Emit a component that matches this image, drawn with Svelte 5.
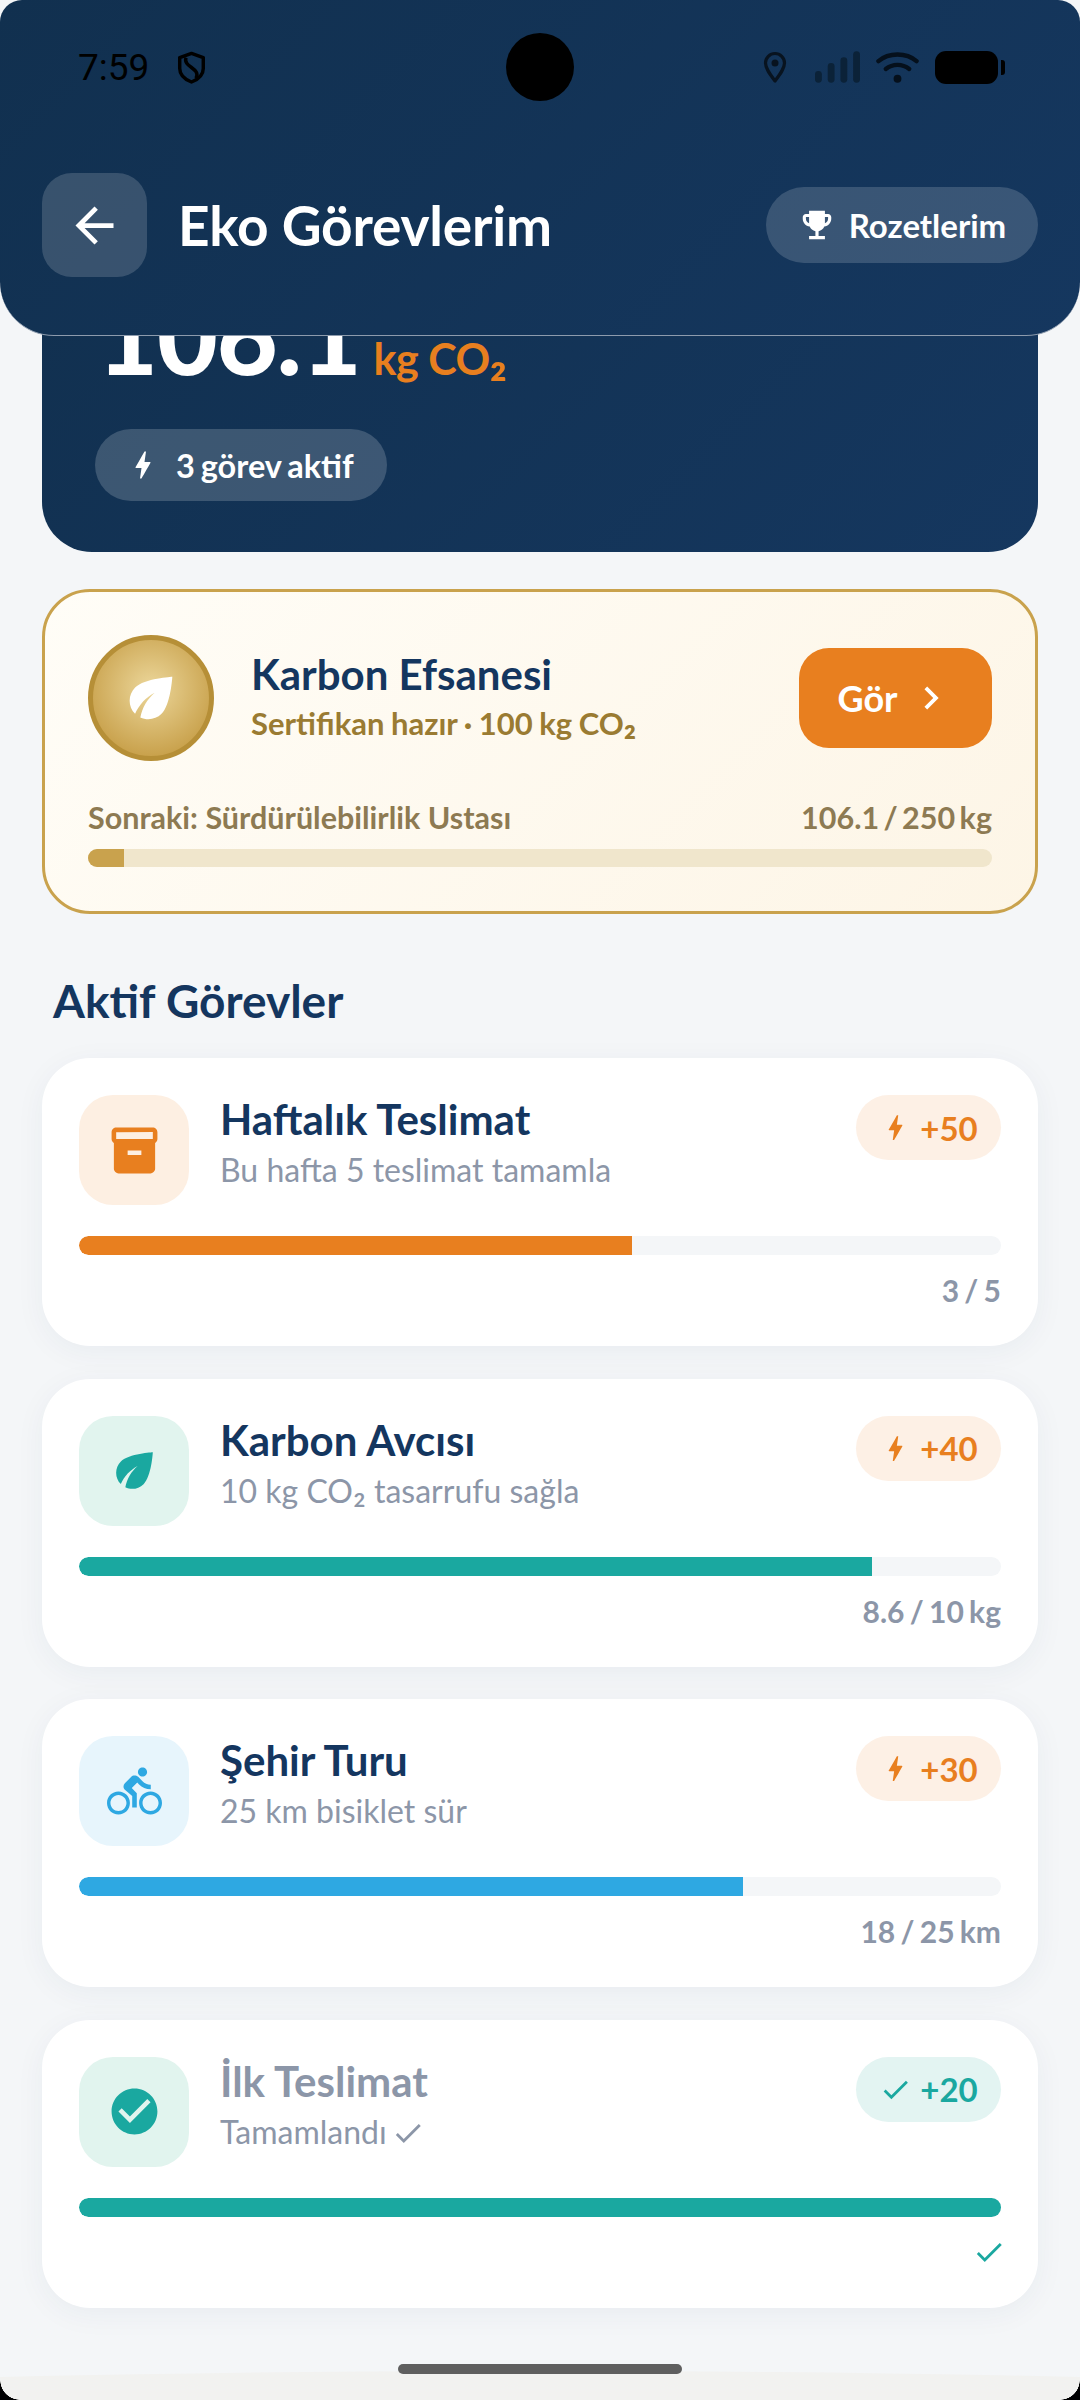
<script>
  const bolt = "M11 21h-1l1-7H7.5c-.58 0-.57-.32-.38-.66.19-.34.05-.08.07-.12C8.48 10.94 10.42 7.54 13 3h1l-1 7h3.5c.49 0 .56.33.47.51l-.07.15C12.96 17.55 11 21 11 21z";
  const check = "M9 16.17L4.83 12l-1.42 1.41L9 19 21 7l-1.41-1.41z";
  const eco = "M6.05 8.05c-2.73 2.73-2.73 7.15-.02 9.88 1.47-3.4 4.09-6.24 7.36-7.93-2.77 2.34-4.71 5.61-5.39 9.32 2.6 1.23 5.8.78 7.95-1.37C19.43 14.47 20 4 20 4S9.53 4.57 6.05 8.05z";
  const box = "M20 2H4c-1 0-2 .9-2 2v3.01c0 .72.43 1.34 1 1.69V20c0 1.1 1.1 2 2 2h14c.9 0 2-.9 2-2V8.7c.57-.35 1-.97 1-1.69V4c0-1.1-1-2-2-2zm-5 12H9v-2h6v2zm5-7H4V4l16-.02V7z";
  const bike = "M15.5 5.5c1.1 0 2-.9 2-2s-.9-2-2-2-2 .9-2 2 .9 2 2 2zM5 12c-2.8 0-5 2.2-5 5s2.2 5 5 5 5-2.2 5-5-2.2-5-5-5zm0 8.5c-1.9 0-3.5-1.6-3.5-3.5s1.6-3.5 3.5-3.5 3.5 1.6 3.5 3.5-1.6 3.5-3.5 3.5zm5.8-10l2.4-2.4.8.8c1.3 1.3 3 2.1 5.1 2.1V9c-1.5 0-2.7-.6-3.6-1.5l-1.9-1.9c-.5-.4-1-.6-1.6-.6s-1.1.2-1.4.6L7.8 8.4c-.4.4-.6.9-.6 1.4 0 .6.2 1.1.6 1.4L11 14v5h2v-6.2l-2.2-2.3zM19 12c-2.8 0-5 2.2-5 5s2.2 5 5 5 5-2.2 5-5-2.2-5-5-5zm0 8.5c-1.9 0-3.5-1.6-3.5-3.5s1.6-3.5 3.5-3.5 3.5 1.6 3.5 3.5-1.6 3.5-3.5 3.5z";
  const circle = "M12 2C6.48 2 2 6.48 2 12s4.48 10 10 10 10-4.48 10-10S17.52 2 12 2zm-2 15l-5-5 1.41-1.41L10 14.17l7.59-7.59L19 8l-9 9z";

  const tasks = [
    { title: "Haftalık Teslimat", desc: "Bu hafta 5 teslimat tamamla", icon: box, tint: "orange", xp: "+50", pct: 60, value: "3 / 5" },
    { title: "Karbon Avcısı", desc: "10 kg CO", sub: "₂", rest: " tasarrufu sağla", icon: eco, tint: "teal", xp: "+40", pct: 86, value: "8.6 / 10 kg" },
    { title: "Şehir Turu", desc: "25 km bisiklet sür", icon: bike, tint: "blue", xp: "+30", pct: 72, value: "18 / 25 km" },
    { title: "İlk Teslimat", desc: "Tamamlandı", icon: circle, tint: "teal", xp: "+20", pct: 100, done: true }
  ];
</script>

<div class="screen">
  <header class="header">
    <div class="status">
      <div class="status-side">
        <span class="time">7:59</span>
        <svg class="shield" viewBox="0 0 32 36" fill="none" stroke="#000" stroke-width="3.8">
          <path d="M16 2.5 29 7v12c0 7-5.5 12-13 15C8.500 31 3 26 3 19V7z" stroke-linejoin="round" />
          <path d="M10 7c-2 5 2 8 6 11s8 6 5 12" />
        </svg>
      </div>
      <div class="camera"></div>
      <div class="status-side right">
        <svg class="pin" viewBox="0 0 24 32" fill="none" stroke="#08131f" stroke-width="3.2">
          <path d="M12 30C6 22 2.500 17 2.500 12a9.500 9.500 0 0 1 19 0c0 5-3.500 10-9.500 18z" stroke-linejoin="round" />
          <circle cx="12" cy="12" r="3.500" fill="#08131f" stroke="none" />
        </svg>
        <svg class="signal" viewBox="0 0 46 32" fill="#0b2238">
          <rect x="0" y="20" width="7" height="12" rx="3.500" />
          <rect x="13" y="12" width="7" height="20" rx="3.500" />
          <rect x="26" y="6" width="7" height="26" rx="3.500" />
          <rect x="39" y="0" width="7" height="32" rx="3.500" />
        </svg>
        <svg class="wifi" viewBox="0 0 44 32" fill="none" stroke="#05101c" stroke-width="4.500" stroke-linecap="round">
          <path d="M2.500 10C13 1 31 1 41.500 10" />
          <path d="M10 18c7-5.500 17-5.500 24 0" />
          <circle cx="22" cy="28" r="4" fill="#05101c" stroke="none" />
        </svg>
        <div class="battery"><span></span></div>
      </div>
    </div>
    <div class="toolbar">
      <button class="back" aria-label="Geri">
        <svg viewBox="0 0 24 24" fill="#fff"><path d="M20 11H7.830l5.590-5.590L12 4l-8 8 8 8 1.410-1.410L7.830 13H20v-2z" /></svg>
      </button>
      <h1>Eko Görevlerim</h1>
      <button class="badges">
        <svg viewBox="0 0 24 24" fill="#fff"><path d="M19 5h-2V3H7v2H5c-1.100 0-2 .9-2 2v1c0 2.550 1.920 4.630 4.390 4.940.63 1.500 1.980 2.630 3.610 2.960V19H7v2h10v-2h-4v-3.100c1.630-.33 2.980-1.460 3.610-2.960C19.080 12.630 21 10.550 21 8V7c0-1.100-.9-2-2-2zM5 8V7h2v3.820C5.840 10.400 5 9.300 5 8zm14 0c0 1.300-.84 2.400-2 2.820V7h2v1z" /></svg>
        Rozetlerim
      </button>
    </div>
  </header>

  <main class="content">
    <section class="hero">
      <div class="amount"><strong>106.1</strong><span>kg CO<i class="sub">₂</i></span></div>
      <div class="active">
        <svg viewBox="0 0 24 24" fill="#fff"><path d={bolt} /></svg>
        3 görev aktif
      </div>
    </section>

    <section class="gold">
      <div class="gold-top">
        <div class="medal"><svg viewBox="0 0 24 24" fill="#fff"><path d={eco} /></svg></div>
        <div class="gold-text">
          <h2>Karbon Efsanesi</h2>
          <p>Sertifikan hazır · 100 kg CO<i class="sub">₂</i></p>
        </div>
        <button class="see">
          Gör
          <svg viewBox="0 0 24 24" fill="#fff"><path d="M10 6L8.590 7.410 13.170 12l-4.580 4.590L10 18l6-6z" /></svg>
        </button>
      </div>
      <div class="gold-row"><span>Sonraki: Sürdürülebilirlik Ustası</span><span class="gold-val">106.1 / 250 kg</span></div>
      <div class="gold-track"><div class="gold-fill"></div></div>
    </section>

    <h3>Aktif Görevler</h3>

    <div class="tasks">
      {#each tasks as t}
        <article class="task">
          <div class="task-top">
            <div class="icon {t.tint}"><svg viewBox="0 0 24 24"><path d={t.icon} /></svg></div>
            <div class="task-text">
              <h4 class:muted={t.done}>{t.title}</h4>
              <p>{t.desc}{#if t.sub}<i class="sub">{t.sub}</i>{t.rest}{/if}{#if t.done}<svg class="tiny" viewBox="0 0 24 24" fill="#8c96a8"><path d={check} /></svg>{/if}</p>
            </div>
            <div class="xp" class:xp-done={t.done}>
              <svg viewBox="0 0 24 24"><path d={t.done ? check : bolt} /></svg>
              {t.xp}
            </div>
          </div>
          <div class="track"><div class="fill {t.tint}-fill" style="width:{t.pct}%"></div></div>
          <div class="value">
            {#if t.done}
              <svg class="done-check" viewBox="0 0 24 24" fill="#1aa8a0"><path d={check} /></svg>
            {:else}
              {t.value}
            {/if}
          </div>
        </article>
      {/each}
    </div>
  </main>

  <div class="gesture"><span></span></div>
  <div class="corner left"></div>
  <div class="corner right"></div>
</div>

<style>
  :global(body) { margin: 0; background: #f4f6f8; }
  .screen {
    position: relative; width: 1080px; height: 2400px; overflow: hidden;
    background: #f4f6f8; font-family: "Lato", "Noto Sans", sans-serif;
  }
  h1, h2, h3, h4, p { margin: 0; }
  button { border: 0; font-family: inherit; padding: 0; }
  .sub { font-style: normal; font-size: 1.2em; line-height: 0; }

  .header {
    position: absolute; top: 0; left: 0; right: 0; z-index: 2; height: 336px; box-sizing: border-box;
    background: linear-gradient(135deg, #11304f, #15375f);
    border-radius: 22px 22px 54px 54px;
    border-bottom: 1px solid #8d9bad;
  }
  .status { height: 134px; display: flex; align-items: center; justify-content: space-between; position: relative; padding: 0 75px 0 78px; }
  .status-side { display: flex; align-items: center; gap: 16px; }
  .status-side.right { gap: 16px; }
  .time { font-family: "Roboto", sans-serif; font-size: 37px; color: #000; width: 83px; }
  .shield { width: 29px; height: 33px; }
  .camera { position: absolute; left: 506px; top: 33px; width: 68px; height: 68px; border-radius: 50%; background: #000; }
  .pin { width: 24px; height: 32px; margin-right: 12px; }
  .signal { width: 45px; height: 32px; }
  .wifi { width: 43px; height: 32px; }
  .battery { width: 63px; height: 33px; border-radius: 11px; background: #000; position: relative; margin-right: 7px; }
  .battery span { position: absolute; right: -7px; top: 9px; width: 4px; height: 15px; background: #000; border-radius: 0 3px 3px 0; }

  .toolbar { display: flex; align-items: center; margin-top: 39px; padding: 0 42px; height: 104px; }
  .back { width: 105px; height: 104px; border-radius: 30px; background: rgba(255,255,255,.16); display: flex; align-items: center; justify-content: center; }
  .back svg { width: 57px; height: 57px; }
  h1 { margin-left: 31px; flex: 1; color: #fff; font-size: 55px; font-weight: 700; line-height: 1; letter-spacing: -.2px; }
  .badges {
    height: 76px; width: 272px; border-radius: 38px; background: rgba(255,255,255,.16);
    color: #fff; font-size: 33px; font-weight: 700; display: flex; align-items: center; justify-content: center; gap: 13px;
  }
  .badges svg { width: 38px; height: 38px; }

  .content { padding: 220px 42px 0; }
  .hero {
    height: 332px; box-sizing: border-box; padding: 0 53px 51px; border-radius: 0 0 50px 50px;
    background: linear-gradient(135deg, #11304f, #15375f);
    display: flex; flex-direction: column; justify-content: flex-end; align-items: flex-start;
  }
  .amount { display: flex; align-items: baseline; gap: 13px; margin-left: 2px; height: 100px; line-height: 100px; margin-bottom: 45px; }
  .amount strong { color: #fff; font-size: 105px; font-weight: 900; letter-spacing: -1px; }
  .amount span { color: #e87f1f; font-size: 43px; font-weight: 700; letter-spacing: -.5px; }
  .active {
    height: 72px; width: 292px; border-radius: 36px; background: rgba(255,255,255,.18); box-sizing: border-box;
    color: #fff; font-size: 32.500px; font-weight: 700; display: flex; align-items: center; padding-left: 34px; gap: 15px; word-spacing: -2px;
  }
  .active svg { width: 36px; height: 36px; margin-left: -4px; }

  .gold {
    margin-top: 37px; height: 325px; box-sizing: border-box; border: 3px solid #c9a24d; border-radius: 48px;
    padding: 43px 43px 0; background: linear-gradient(135deg, #fffdf7, #fdf5e6);
  }
  .gold-top { display: flex; align-items: center; }
  .medal {
    width: 126px; height: 126px; box-sizing: border-box; border-radius: 50%; border: 5px solid #b68f37;
    background: radial-gradient(circle at 50% 42%, #ecd79b, #c9a24d 75%); display: flex; align-items: center; justify-content: center;
  }
  .medal svg { width: 64px; height: 64px; }
  .gold-text { margin-left: 37px; flex: 1; }
  h2 { color: #14365f; font-size: 42px; font-weight: 700; line-height: 46px; }
  .gold-text p { color: #9a7b32; font-size: 31px; font-weight: 700; line-height: 44px; margin-top: 4px; word-spacing: -1px; }
  .see {
    width: 193px; height: 100px; border-radius: 30px; background: #e87f1f; color: #fff; font-size: 36px; font-weight: 700;
    display: flex; align-items: center; justify-content: center; gap: 10px;
  }
  .see svg { width: 46px; height: 46px; }
  .gold-row { display: flex; justify-content: space-between; margin-top: 37px; color: #8d7a52; font-size: 30.500px; font-weight: 700; line-height: 38px; }
  .gold-val { word-spacing: -3px; }
  .gold-track { height: 18px; margin-top: 13px; border-radius: 9px; background: #f0e6cc; overflow: hidden; }
  .gold-fill { width: 36px; height: 100%; background: #c9a24d; }

  h3 { color: #14365f; font-size: 46px; font-weight: 700; line-height: 54px; margin: 60px 0 0 11px; }
  .tasks { display: flex; flex-direction: column; gap: 32.500px; margin-top: 30px; }
  .task { height: 288px; box-sizing: border-box; background: #fff; border-radius: 48px; padding: 37px; box-shadow: 0 6px 30px rgba(20,54,95,.05); }
  .task-top { display: flex; align-items: flex-start; height: 110px; }
  .icon { width: 110px; height: 110px; border-radius: 34px; flex: none; display: flex; align-items: center; justify-content: center; }
  .icon svg { width: 55px; height: 55px; }
  .orange { background: #fdefe2; fill: #e87f1f; }
  .teal { background: #e1f4ee; fill: #1aa8a0; }
  .blue { background: #e7f5fc; fill: #2ea8e2; }
  .task-text { flex: 1; margin-left: 31px; }
  h4 { color: #14365f; font-size: 42px; font-weight: 700; line-height: 50px; margin-top: -1px; }
  h4.muted { color: #8c96a8; }
  .task-text p { color: #8c96a8; font-size: 32px; line-height: 40px; margin-top: 6px; white-space: pre-wrap; }
  .tiny { width: 34px; height: 34px; vertical-align: -6px; margin-left: 4px; }
  .xp {
    height: 65px; width: 145px; box-sizing: border-box; border-radius: 33px; background: #fdf0e5; color: #e87f1f; fill: #e87f1f;
    font-size: 33px; font-weight: 700; display: flex; align-items: center; justify-content: center; gap: 8px;
  }
  .xp svg { width: 33px; height: 33px; }
  .xp-done { background: #e3f4f2; color: #1aa8a0; fill: #1aa8a0; }
  .track { height: 19px; margin-top: 31px; border-radius: 9.500px; background: #f4f6f8; overflow: hidden; }
  .fill { height: 100%; border-radius: 9px 0 0 9px; }
  .orange-fill { background: #e87f1f; }
  .teal-fill { background: #1aa8a0; border-radius: 9px 0 0 9px; }
  .blue-fill { background: #2ea8e2; }
  .value { text-align: right; color: #8c96a8; font-size: 30px; font-weight: 700; line-height: 38px; margin-top: 16px; height: 38px; word-spacing: -2px; }
  .done-check { width: 34px; height: 34px; margin: 2px -5px 0 0; }

  .gesture { position: absolute; left: 0; right: 0; bottom: 0; height: 36px; overflow: hidden; }
  .gesture::before { content: ""; position: absolute; left: -660px; right: -660px; top: 7px; height: 112px; border-radius: 50%; background: #f2f2f0; }
  .gesture span { position: absolute; left: 398px; top: 0; width: 284px; height: 10px; border-radius: 5px; background: #5f5f5f; }
  .corner { position: absolute; bottom: 0; width: 20px; height: 20px; }
  .corner.left { left: 0; background: radial-gradient(circle at 20px 0, transparent 19.500px, #000 20px); }
  .corner.right { right: 0; background: radial-gradient(circle at 0 0, transparent 19.500px, #000 20px); }
</style>
